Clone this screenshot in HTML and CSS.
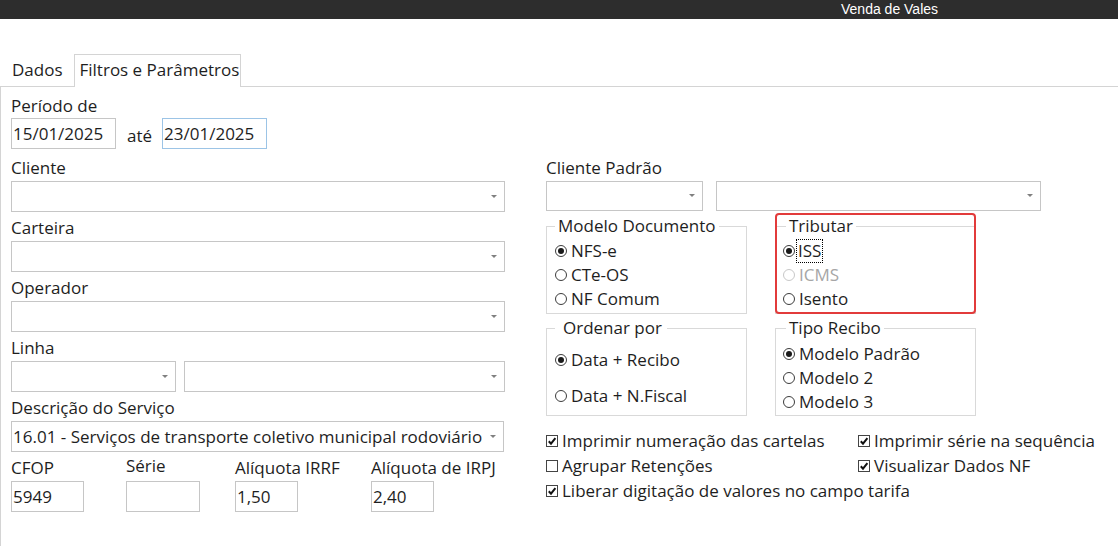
FILE: index.html
```html
<!DOCTYPE html>
<html lang="pt-BR">
<head>
    <meta charset="UTF-8">
    <title>Venda de Vales</title>
    <link rel="stylesheet" href="styles.css">
</head>
<body>
    <div class="titlebar">Venda de Vales</div>

    <div class="tabs">
        <div class="tab">Dados</div>
        <div class="tab active">Filtros e Parâmetros</div>
    </div>

    <div class="panel">
        <div class="col-left">
            <div class="field period">
                <label class="caption">Período de</label>
                <div class="date-row">
                    <input type="text" class="input date" value="15/01/2025">
                    <span class="ate">até</span>
                    <input type="text" class="input date focused" value="23/01/2025">
                </div>
            </div>

            <div class="field">
                <label class="caption">Cliente</label>
                <div class="combo"></div>
            </div>

            <div class="field">
                <label class="caption">Carteira</label>
                <div class="combo"></div>
            </div>

            <div class="field">
                <label class="caption">Operador</label>
                <div class="combo"></div>
            </div>

            <div class="field">
                <label class="caption">Linha</label>
                <div class="linha-row">
                    <div class="combo linha-code"></div>
                    <div class="combo linha-name"></div>
                </div>
            </div>

            <div class="field">
                <label class="caption">Descrição do Serviço</label>
                <div class="combo service">16.01 - Serviços de transporte coletivo municipal rodoviário</div>
            </div>

            <div class="field num-row">
                <div class="num-field">
                    <label class="caption">CFOP</label>
                    <input type="text" class="input cfop" value="5949">
                </div>
                <div class="num-field">
                    <label class="caption serie">Série</label>
                    <input type="text" class="input serie-box" value="">
                </div>
                <div class="num-field">
                    <label class="caption">Alíquota IRRF</label>
                    <input type="text" class="input aliq" value="1,50">
                </div>
                <div class="num-field">
                    <label class="caption">Alíquota de IRPJ</label>
                    <input type="text" class="input aliq" value="2,40">
                </div>
            </div>
        </div>

        <div class="col-right">
            <label class="caption">Cliente Padrão</label>
            <div class="combo-row">
                <div class="combo short cp-code"></div>
                <div class="combo short cp-name"></div>
            </div>

            <div class="groups">
                <fieldset class="group">
                    <legend>Modelo Documento</legend>
                    <div class="radio on"><span class="mark"></span>NFS-e</div>
                    <div class="radio"><span class="mark"></span>CTe-OS</div>
                    <div class="radio"><span class="mark"></span>NF Comum</div>
                </fieldset>

                <div class="highlight-wrap">
                    <fieldset class="group shifted">
                        <legend>Tributar</legend>
                        <div class="radio on"><span class="mark"></span><span class="focus">ISS</span></div>
                        <div class="radio disabled"><span class="mark"></span>ICMS</div>
                        <div class="radio"><span class="mark"></span>Isento</div>
                    </fieldset>
                    <div class="highlight"></div>
                </div>

                <fieldset class="group lower order">
                    <legend>Ordenar por</legend>
                    <div class="radio tall on"><span class="mark"></span>Data + Recibo</div>
                    <div class="radio tall"><span class="mark"></span>Data + N.Fiscal</div>
                </fieldset>

                <fieldset class="group lower shifted">
                    <legend>Tipo Recibo</legend>
                    <div class="radio on"><span class="mark"></span>Modelo Padrão</div>
                    <div class="radio"><span class="mark"></span>Modelo 2</div>
                    <div class="radio"><span class="mark"></span>Modelo 3</div>
                </fieldset>
            </div>

            <div class="checks">
                <div class="check on"><span class="box"><svg viewBox="0 0 10 10"><path d="M1.8 5.2 L4 7.6 L8.4 2.2"/></svg></span>Imprimir numeração das cartelas</div>
                <div class="check on"><span class="box"><svg viewBox="0 0 10 10"><path d="M1.8 5.2 L4 7.6 L8.4 2.2"/></svg></span>Imprimir série na sequência</div>
                <div class="check"><span class="box"></span>Agrupar Retenções</div>
                <div class="check on"><span class="box"><svg viewBox="0 0 10 10"><path d="M1.8 5.2 L4 7.6 L8.4 2.2"/></svg></span>Visualizar Dados NF</div>
                <div class="check on wide"><span class="box"><svg viewBox="0 0 10 10"><path d="M1.8 5.2 L4 7.6 L8.4 2.2"/></svg></span>Liberar digitação de valores no campo tarifa</div>
            </div>
        </div>
    </div>
</body>
</html>
```

FILE: styles.css
```css
body {
    margin: 0;
    font-family: "Open Sans", sans-serif;
    font-size: 17px;
    line-height: 20px;
    color: #1e1e1e;
    background: #fff;
}
.titlebar {
    height: 19px;
    background: #2d2d2d;
    color: #fff;
    font: 14px/19px "Liberation Sans", Arial, sans-serif;
    padding-left: 841px;
}
.tabs {
    display: flex;
    align-items: flex-start;
    margin-top: 35px;
    height: 32px;
    border-bottom: 1px solid #d4d4d4;
}
.tab {
    padding: 6px 5px 0;
    margin-left: 7px;
    white-space: nowrap;
}
.tab.active {
    margin-left: 6px;
    padding: 5px 1px 0 5px;
    height: 33px;
    box-sizing: border-box;
    border: 1px solid #d4d4d4;
    border-bottom: none;
    background: #fff;
}
.panel {
    display: flex;
    border-left: 1px solid #d4d4d4;
    padding: 9px 0 0 10px;
    min-height: calc(100vh - 87px);
    box-sizing: border-box;
}
.col-left {
    width: 494px;
    flex: none;
}
.col-right {
    margin-left: 41px;
    padding-top: 62px;
    width: 545px;
}
.caption {
    display: block;
    margin-bottom: 3px;
    white-space: nowrap;
}
.field {
    margin-top: 6px;
}
.field.period {
    margin-top: 0;
}
.field.period + .field {
    margin-top: 9px;
}
.field.period .caption {
    margin-bottom: 2px;
}
.input {
    display: block;
    height: 31px;
    box-sizing: border-box;
    border: 1px solid #c6c6c6;
    padding: 0 1px;
    margin: 0;
    font: inherit;
    color: inherit;
    outline: none;
    background: #fff;
}
.input.focused {
    border-color: #9cc4e6;
}
.date-row {
    display: flex;
}
.date {
    width: 105px;
}
.ate {
    align-self: flex-end;
    margin: 0 10px 3px 11px;
}
.combo {
    position: relative;
    height: 31px;
    box-sizing: border-box;
    border: 1px solid #c6c6c6;
    padding: 0 22px 0 1px;
    line-height: 29px;
    white-space: nowrap;
    overflow: hidden;
}
.combo::after {
    content: "";
    position: absolute;
    right: 7px;
    top: 13px;
    border-left: 3px solid transparent;
    border-right: 3px solid transparent;
    border-top: 3px solid #808080;
}
.combo.service {
    width: 493px;
    padding-right: 18px;
}
.linha-row {
    display: flex;
    gap: 8px;
}
.linha-code {
    width: 165px;
}
.linha-name {
    flex: 1;
}
.num-row {
    display: grid;
    grid-template-columns: 115px 109px 136px 1fr;
}
.caption.serie {
    position: relative;
    top: -2px;
}
.cfop {
    width: 73px;
}
.serie-box {
    width: 74px;
}
.aliq {
    width: 63px;
}
.combo-row {
    display: flex;
    gap: 13px;
}
.combo.short {
    height: 30px;
    line-height: 28px;
}
.combo.short::after {
    top: 12px;
}
.cp-code {
    width: 157px;
}
.cp-name {
    width: 325px;
}
.groups {
    display: grid;
    grid-template-columns: 201px 201px;
    column-gap: 28px;
    row-gap: 4px;
    margin-top: 5px;
}
.group {
    margin: 0;
    min-width: 0;
    border: 1px solid #d9d9d9;
    padding: 3px 0 2px 8px;
}
.group legend {
    padding: 0 3px;
    line-height: 20px;
    white-space: nowrap;
}
.group.shifted {
    padding-left: 7px;
}
.group.shifted legend {
    margin-left: 3px;
}
.group.lower {
    padding-top: 4px;
    padding-bottom: 1px;
}
.group.order legend {
    padding: 0 5px 0 8px;
}
.radio {
    display: flex;
    align-items: center;
    height: 24px;
    white-space: nowrap;
}
.radio.tall {
    height: 36px;
}
.radio .mark {
    flex: none;
    display: flex;
    align-items: center;
    justify-content: center;
    width: 12px;
    height: 12px;
    box-sizing: border-box;
    border: 1px solid #3c3c3c;
    border-radius: 50%;
    margin-right: 4px;
}
.radio.on .mark::after {
    content: "";
    width: 6px;
    height: 6px;
    border-radius: 50%;
    background: #1a1a1a;
}
.radio.disabled {
    color: #a6a6a6;
}
.radio.disabled .mark {
    border-color: #c8c8c8;
}
.focus {
    outline: 1px dotted #000;
    padding: 0 1px;
    margin-left: -2px;
    line-height: 22px;
}
.highlight-wrap {
    position: relative;
}
.highlight-wrap .group {
    height: 100%;
    box-sizing: border-box;
}
.highlight {
    position: absolute;
    top: -3px;
    left: 0;
    right: 0;
    bottom: 0;
    border: 2px solid #e23b3b;
    border-radius: 4px;
    pointer-events: none;
}
.checks {
    display: grid;
    grid-template-columns: 312px auto;
    grid-auto-rows: 25px;
    margin-top: 12px;
}
.check {
    display: flex;
    align-items: center;
    white-space: nowrap;
}
.check.wide {
    grid-column: 1 / -1;
}
.check .box {
    flex: none;
    width: 12px;
    height: 12px;
    box-sizing: border-box;
    border: 1px solid #444;
    margin-right: 4px;
    display: flex;
}
.check .box svg {
    width: 10px;
    height: 10px;
}
.check .box path {
    fill: none;
    stroke: #111;
    stroke-width: 2;
}
```
